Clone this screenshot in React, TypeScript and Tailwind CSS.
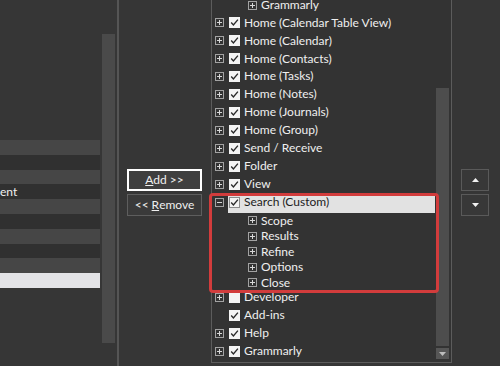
import React from "react";

type TreeRow = {
  label: string;
  level: 0 | 1;
  expander?: "plus" | "minus" | null;
  checked?: boolean;
  selected?: boolean;
  first?: boolean;
};

const ROWS: TreeRow[] = [
  { label: "Grammarly", level: 1, expander: "plus", first: true },
  { label: "Home (Calendar Table View)", level: 0, expander: "plus", checked: true },
  { label: "Home (Calendar)", level: 0, expander: "plus", checked: true },
  { label: "Home (Contacts)", level: 0, expander: "plus", checked: true },
  { label: "Home (Tasks)", level: 0, expander: "plus", checked: true },
  { label: "Home (Notes)", level: 0, expander: "plus", checked: true },
  { label: "Home (Journals)", level: 0, expander: "plus", checked: true },
  { label: "Home (Group)", level: 0, expander: "plus", checked: true },
  { label: "Send / Receive", level: 0, expander: "plus", checked: true },
  { label: "Folder", level: 0, expander: "plus", checked: true },
  { label: "View", level: 0, expander: "plus", checked: true },
  { label: "Search (Custom)", level: 0, expander: "minus", checked: true, selected: true },
  { label: "Scope", level: 1, expander: "plus" },
  { label: "Results", level: 1, expander: "plus" },
  { label: "Refine", level: 1, expander: "plus" },
  { label: "Options", level: 1, expander: "plus" },
  { label: "Close", level: 1, expander: "plus" },
  { label: "Developer", level: 0, expander: "plus", checked: false },
  { label: "Add-ins", level: 0, expander: null, checked: true },
  { label: "Help", level: 0, expander: "plus", checked: true },
  { label: "Grammarly", level: 0, expander: "plus", checked: true },
];

function Expander({ kind }: { kind?: "plus" | "minus" | null }) {
  if (!kind) return <span className="w-[9px] h-[9px] shrink-0" />;
  return (
    <svg width="9" height="9" viewBox="0 0 9 9" className="shrink-0">
      <rect x="0.5" y="0.5" width="8" height="8" fill="none" stroke="#a3a3a3" />
      <path d="M2 4.5h5" stroke="#d8d8d8" />
      {kind === "plus" && <path d="M4.5 2v5" stroke="#d8d8d8" />}
    </svg>
  );
}

function CheckBox({ checked, framed }: { checked?: boolean; framed?: boolean }) {
  return (
    <svg width="11" height="11" viewBox="0 0 11 11" className="shrink-0">
      <rect
        x="0.5"
        y="0.5"
        width="10"
        height="10"
        fill="#f4f4f4"
        stroke={framed ? "#8c8c8c" : "#f4f4f4"}
      />
      {checked && (
        <path d="M2.2 5.6 4.4 7.9 8.9 2.6" fill="none" stroke="#2a2a2a" strokeWidth="1.4" />
      )}
    </svg>
  );
}

function Row({ row }: { row: TreeRow }) {
  if (row.level === 1) {
    return (
      <div
        className={
          row.first
            ? "flex h-[15.6px] items-center pb-[4.8px] pl-[36px]"
            : "flex h-[15.5px] items-center pl-[36px]"
        }
      >
        <Expander kind={row.expander} />
        <span className="ml-[4px] whitespace-nowrap leading-none text-[#efefef]">{row.label}</span>
      </div>
    );
  }
  return (
    <div className="flex h-[18.1px]">
      <div className="flex items-center pb-[4px] pl-[3px]">
        <Expander kind={row.expander} />
      </div>
      <div
        className={`ml-[4px] mr-[1px] flex flex-1 items-center pb-[4px] pl-[1px] ${
          row.selected ? "bg-[#e2e2e2] text-[#1c1c1c]" : "text-[#efefef]"
        }`}
      >
        <CheckBox checked={row.checked} framed={row.selected} />
        <span className="ml-[4px] whitespace-nowrap leading-none">{row.label}</span>
      </div>
    </div>
  );
}

const LEFT_ROWS = ["l", "d", "l", "d", "l", "d", "l", "d", "l", "s"];

export default function App() {
  return (
    <div className="relative flex h-[366px] w-[500px] overflow-hidden bg-[#363636] font-[family-name:Lato,'Open_Sans',sans-serif] text-[12px] text-[#efefef]">
      {/* left list */}
      <div className="flex w-[119px] shrink-0">
        <div className="flex w-[100px] flex-col pt-[140px]">
          {LEFT_ROWS.map((k, i) => (
            <div
              key={i}
              className={`flex h-[14.8px] items-center ${
                k === "l" ? "bg-[#464646]" : k === "s" ? "bg-[#e3e3e6]" : "bg-[#303030]"
              }`}
            >
              {i === 3 && <span className="leading-none">ent</span>}
            </div>
          ))}
        </div>
        <div className="ml-[2px] mt-[34px] h-[309px] w-[13px] bg-[#4a4a4a]" />
        <div className="ml-[2px] w-[2px] bg-[#555555]" />
      </div>

      {/* add / remove */}
      <div className="flex w-[92px] shrink-0 flex-col gap-[3px] pl-[8px] pt-[169px]">
        <button className="flex h-[22px] w-[75px] items-center justify-center border-2 border-white bg-[#3f3f3f] leading-none">
          <span className="underline">A</span>dd &gt;&gt;
        </button>
        <button className="flex h-[22px] w-[75px] items-center justify-center border border-[#5e5e5e] bg-[#3a3a3a] leading-none">
          &lt;&lt; <span className="ml-[3px] underline">R</span>emove
        </button>
      </div>

      {/* tree */}
      <div className="flex h-[363px] w-[241px] shrink-0 border-x border-b border-[#5c5c5c] bg-[#333333]">
        <div className="flex w-[224px] flex-col overflow-hidden">
          {ROWS.map((r, i) => (
            <Row key={i} row={r} />
          ))}
        </div>
        <div className="flex w-[13px] flex-col">
          <div className="h-[88px]" />
          <div className="h-[258px] bg-[#4d4d4d]" />
          <div className="mt-[2px] flex h-[11px] items-center justify-center bg-[#565656]">
            <svg width="7" height="4" viewBox="0 0 7 4">
              <path d="M0 0h7L3.5 4z" fill="#bdbdbd" />
            </svg>
          </div>
        </div>
      </div>

      {/* up / down */}
      <div className="flex flex-col gap-[3px] pl-[9px] pt-[169px]">
        <button className="flex h-[22px] w-[28px] items-center justify-center border border-[#5a5a5a] bg-[#383838]">
          <svg width="7" height="4" viewBox="0 0 7 4">
            <path d="M0 4h7L3.5 0z" fill="#f2f2f2" />
          </svg>
        </button>
        <button className="flex h-[22px] w-[28px] items-center justify-center border border-[#5a5a5a] bg-[#383838]">
          <svg width="7" height="4" viewBox="0 0 7 4">
            <path d="M0 0h7L3.5 4z" fill="#f2f2f2" />
          </svg>
        </button>
      </div>

      {/* highlight box */}
      <div className="absolute left-[209px] top-[193px] h-[100px] w-[230px] rounded-[4px] border-[3px] border-[#d23c3c]" />
    </div>
  );
}
